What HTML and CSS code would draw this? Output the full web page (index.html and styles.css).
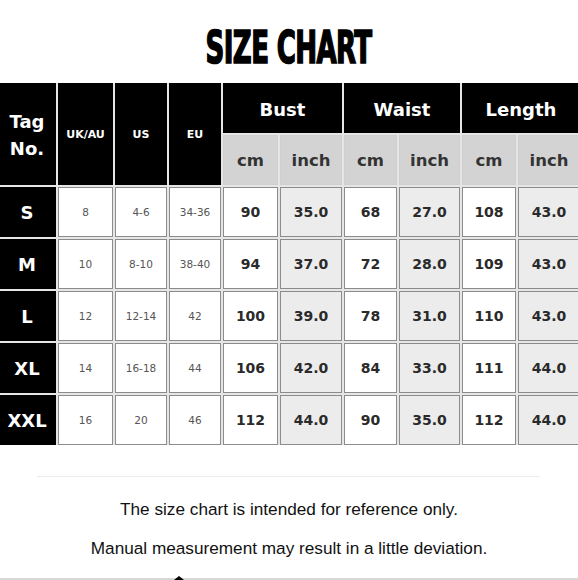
FILE: index.html
```html
<!DOCTYPE html>
<html lang="en">
<head>
<meta charset="utf-8">
<title>Size Chart</title>
<link rel="stylesheet" href="styles.css">
</head>
<body>
<div class="page">
  <header class="title-wrap"><h1 class="title">SIZE CHART</h1></header>

  <div class="chart">
    <div class="c dark r2 tag">Tag<br>No.</div>
    <div class="c dark r2 small-h">UK/AU</div>
    <div class="c dark r2 small-h">US</div>
    <div class="c dark r2 small-h">EU</div>
    <div class="c dark c2 group">Bust</div>
    <div class="c dark c2 group">Waist</div>
    <div class="c dark c2 group">Length</div>

    <div class="c unit">cm</div><div class="c unit">inch</div>
    <div class="c unit">cm</div><div class="c unit">inch</div>
    <div class="c unit">cm</div><div class="c unit">inch</div>

    <div class="c dark size">S</div>
    <div class="c reg">8</div><div class="c reg">4-6</div><div class="c reg">34-36</div>
    <div class="c num">90</div><div class="c num alt">35.0</div>
    <div class="c num">68</div><div class="c num alt">27.0</div>
    <div class="c num">108</div><div class="c num alt">43.0</div>

    <div class="c dark size">M</div>
    <div class="c reg">10</div><div class="c reg">8-10</div><div class="c reg">38-40</div>
    <div class="c num">94</div><div class="c num alt">37.0</div>
    <div class="c num">72</div><div class="c num alt">28.0</div>
    <div class="c num">109</div><div class="c num alt">43.0</div>

    <div class="c dark size">L</div>
    <div class="c reg">12</div><div class="c reg">12-14</div><div class="c reg">42</div>
    <div class="c num">100</div><div class="c num alt">39.0</div>
    <div class="c num">78</div><div class="c num alt">31.0</div>
    <div class="c num">110</div><div class="c num alt">43.0</div>

    <div class="c dark size">XL</div>
    <div class="c reg">14</div><div class="c reg">16-18</div><div class="c reg">44</div>
    <div class="c num">106</div><div class="c num alt">42.0</div>
    <div class="c num">84</div><div class="c num alt">33.0</div>
    <div class="c num">111</div><div class="c num alt">44.0</div>

    <div class="c dark size">XXL</div>
    <div class="c reg">16</div><div class="c reg">20</div><div class="c reg">46</div>
    <div class="c num">112</div><div class="c num alt">44.0</div>
    <div class="c num">90</div><div class="c num alt">35.0</div>
    <div class="c num">112</div><div class="c num alt">44.0</div>
  </div>

  <div class="rule"></div>
  <p class="note first">The size chart is intended for reference only.</p>
  <p class="note second">Manual measurement may result in a little deviation.</p>
  <div class="bottom-edge"><span class="marker"></span></div>
</div>
</body>
</html>
```

FILE: styles.css
```css
html, body {
  margin: 0;
  padding: 0;
  background: #fff;
  overflow: hidden;
}
.page {
  width: 578px;
  height: 580px;
  position: relative;
  overflow: hidden;
  font-family: "DejaVu Sans", Verdana, sans-serif;
}
.title-wrap {
  height: 83px;
  display: flex;
  justify-content: center;
  align-items: flex-start;
}
.title {
  margin: 24px 0 0 0;
  font-family: "DejaVu Sans Condensed", "DejaVu Sans", sans-serif;
  font-stretch: condensed;
  font-weight: 700;
  font-size: 45px;
  line-height: 48px;
  color: #000;
  letter-spacing: -1px;
  transform: scaleX(0.645);
  -webkit-text-stroke: 1.6px #000;
  white-space: nowrap;
}
.chart {
  display: grid;
  grid-template-columns: 58px 55px 52px 52px 55px 62px 53px 61px 54px 62px;
  grid-auto-rows: 50px;
  gap: 2px;
  margin-left: -2px;
  width: 582px;
  background: #e6e6e6;
}
.c {
  box-sizing: border-box;
  display: flex;
  align-items: center;
  justify-content: center;
  text-align: center;
  border: 1px solid #8c8c8c;
  background: #fff;
  color: #222;
}
.r2 { grid-row: span 2; }
.c2 { grid-column: span 2; }
.dark {
  background: #000;
  border-color: #000;
  color: #fff;
  font-weight: 700;
}
.tag {
  font-size: 18px;
  line-height: 27px;
  padding-top: 2px;
}
.small-h {
  font-size: 11px;
}
.group {
  font-size: 18px;
  padding-top: 2px;
}
.unit {
  background: #d3d3d3;
  border-color: #cfcfcf;
  color: #333;
  font-weight: 700;
  font-size: 16.5px;
}
.size {
  font-size: 18px;
}
.reg {
  font-size: 10.5px;
  color: #555;
}
.num {
  font-size: 14px;
  font-weight: 700;
  color: #2a2a2a;
}
.alt {
  background: #ececec;
}
.rule {
  height: 1px;
  background: #ececec;
  margin: 31px 38px 0 37px;
}
.note {
  margin: 0;
  text-align: center;
  font-family: "Liberation Sans", Arial, sans-serif;
  font-size: 17.2px;
  line-height: 20px;
  color: #111;
}
.note.first { margin-top: 22px; }
.note.second { margin-top: 19px; }
.bottom-edge {
  position: absolute;
  left: 0;
  right: 0;
  bottom: 0;
  height: 2px;
  background: #d8d8d8;
}
.marker {
  position: absolute;
  left: 174px;
  bottom: 0;
  width: 0;
  height: 0;
  border-left: 5px solid transparent;
  border-right: 5px solid transparent;
  border-bottom: 4px solid #000;
}
```
